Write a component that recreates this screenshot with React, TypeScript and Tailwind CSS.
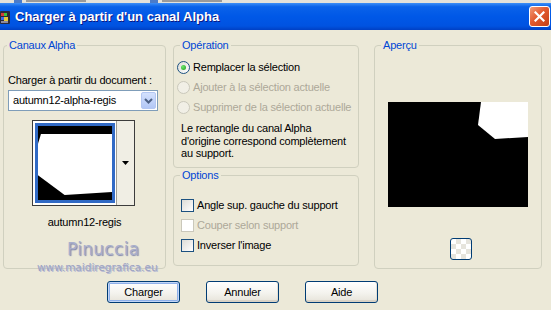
import React from "react";

function Radio({ checked, disabled }: { checked?: boolean; disabled?: boolean }) {
  return (
    <span
      className={
        disabled
          ? "w-[13px] h-[13px] rounded-full border border-[#CAC8BB] bg-[#F1EFE6] flex items-center justify-center shrink-0"
          : "w-[13px] h-[13px] rounded-full border border-[#1C5180] bg-[linear-gradient(135deg,#DCDCD7,#FFFFFF)] flex items-center justify-center shrink-0"
      }
    >
      {checked && (
        <span className="w-[5px] h-[5px] rounded-full bg-[radial-gradient(circle_at_35%_35%,#6CE86C,#1E9A1E)]" />
      )}
    </span>
  );
}

function Check({ disabled }: { disabled?: boolean }) {
  return (
    <span
      className={
        disabled
          ? "w-[13px] h-[13px] border border-[#CAC8BB] bg-white shrink-0"
          : "w-[13px] h-[13px] border border-[#1C5180] bg-[linear-gradient(135deg,#DCDCD7,#FFFFFF)] shrink-0"
      }
    />
  );
}

function XPButton({ label, def }: { label: string; def?: boolean }) {
  return (
    <div
      className={
        def
          ? "w-[73px] h-[22px] rounded-[3px] border border-[#003C74] bg-[linear-gradient(180deg,#FFFFFF_0%,#F4F3EE_55%,#E6E3D9_100%)] shadow-[inset_0_0_0_1px_#C3D6F6,inset_0_0_0_2px_#8EB0EA] flex items-center justify-center text-[11px] text-black"
          : "w-[73px] h-[22px] rounded-[3px] border border-[#003C74] bg-[linear-gradient(180deg,#FFFFFF_0%,#F4F3EE_55%,#E6E3D9_100%)] shadow-[inset_0_-2px_0_#D8D2C6,inset_-1px_0_0_#E4E0D5] flex items-center justify-center text-[11px] text-black"
      }
    >
      {label}
    </div>
  );
}

export default function App() {
  return (
    <div className="relative w-[551px] h-[310px] overflow-hidden bg-[#ECE9D8] font-['Liberation_Sans',Arial,sans-serif] text-[11px] tracking-[-0.2px] text-black">
      {/* strip of window behind */}
      <div className="h-[3px] bg-[#E4E2DA] flex">
        <div className="ml-[14px] w-[8px] h-[3px] bg-[#4A7BC9]" />
        <div className="ml-[4px] w-[60px] h-[2px] bg-[#9A9A9A]" />
        <div className="ml-[64px] w-[8px] h-[3px] bg-[#4A7BC9]" />
        <div className="ml-[4px] w-[60px] h-[2px] bg-[#9A9A9A]" />
      </div>

      {/* title bar */}
      <div className="h-[27px] flex items-center bg-[linear-gradient(180deg,#3D8FF7_0%,#0A62E9_14%,#0058E7_50%,#0053E1_85%,#0040C4_100%)]">
        <svg width="10" height="13" viewBox="0 0 10 13" className="shrink-0 mt-[1px]">
          <rect x="0" y="0" width="10" height="13" rx="1" fill="#2A2A3A" />
          <rect x="1" y="2" width="3" height="3" fill="#D83A3A" />
          <rect x="4" y="2" width="3" height="3" fill="#3AC83A" />
          <rect x="1" y="6" width="3" height="3" fill="#3A6AE8" />
          <rect x="4" y="6" width="4" height="4" fill="#E8C83A" />
          <rect x="1" y="10" width="7" height="2" fill="#8A8AA0" />
        </svg>
        <div className="ml-[5px] text-white font-bold text-[13px] tracking-normal leading-none whitespace-nowrap [text-shadow:1px_1px_0_#0A1883]">
          Charger à partir d'un canal Alpha
        </div>
        <div className="flex-1" />
        <div className="w-[21px] h-[21px] mr-[1px] rounded-[3px] border border-white bg-[linear-gradient(135deg,#F19A78_0%,#E25A2F_45%,#C53F15_100%)] flex items-center justify-center">
          <svg width="11" height="11" viewBox="0 0 11 11">
            <path d="M1.5 1.5 L9.5 9.5 M9.5 1.5 L1.5 9.5" stroke="#FFFFFF" strokeWidth="2.2" strokeLinecap="square" />
          </svg>
        </div>
      </div>

      {/* body */}
      <div className="flex pt-[8px] pl-[3px]">
        {/* Canaux Alpha */}
        <fieldset className="w-[163px] h-[231px] rounded-[4px] border border-[#D0D0BF]">
          <legend className="ml-[3px] px-[2px] leading-[14px] text-[#0046D5]">Canaux Alpha</legend>
          <div className="pt-[22px] pl-[4px]">
            <div className="leading-[13px] whitespace-nowrap">Charger à partir du document :</div>
            <div className="mt-[3px] w-[150px] h-[21px] border border-[#7F9DB9] bg-white p-[1px] flex items-center">
              <div className="flex-1 pl-[3px] leading-[17px] whitespace-nowrap">autumn12-alpha-regis</div>
              <div className="w-[15px] h-[17px] rounded-[2px] border border-[#B4C7F2] bg-[linear-gradient(180deg,#D4E1FD,#B2C7F6)] flex items-center justify-center">
                <svg width="9" height="6" viewBox="0 0 9 6">
                  <path d="M1 1 L4.5 4.5 L8 1" stroke="#4D6185" strokeWidth="2" fill="none" />
                </svg>
              </div>
            </div>
            <div className="mt-[9px] ml-[24px] w-[103px] h-[86px] border border-[#3C3C3C] flex">
              <div className="w-[83px] h-full bg-white pl-[2px] pt-[2px] pr-[1px] pb-[2px]">
                <div className="w-[80px] h-[80px] border-[3px] border-[#316AC5]">
                  <svg width="74" height="74" viewBox="0 0 75 75" preserveAspectRatio="none" className="block">
                    <rect width="75" height="75" fill="#000" />
                    <polygon points="3,8 75,8 75,67 27,70 0,50 0,18" fill="#FFF" />
                  </svg>
                </div>
              </div>
              <div className="flex-1 h-full border-l border-[#A09E94] bg-[#F0EEE4] flex items-center justify-center">
                <svg width="7" height="4" viewBox="0 0 7 4">
                  <path d="M0 0 L7 0 L3.5 4 Z" fill="#000" />
                </svg>
              </div>
            </div>
            <div className="mt-[10px] w-[161px] -ml-[4px] text-center leading-[13px]">autumn12-regis</div>
          </div>
        </fieldset>

        {/* middle column */}
        <div className="ml-[7px] w-[186px] flex flex-col">
          <fieldset className="w-[186px] h-[130px] rounded-[4px] border border-[#D0D0BF]">
            <legend className="ml-[6px] px-[2px] leading-[14px] text-[#0046D5]">Opération</legend>
            <div className="pt-[5px] pl-[3px]">
              <div className="h-[20px] flex items-center gap-[3px] whitespace-nowrap">
                <Radio checked />
                <span>Remplacer la sélection</span>
              </div>
              <div className="h-[20px] flex items-center gap-[3px] whitespace-nowrap text-[#ACA899]">
                <Radio disabled />
                <span>Ajouter à la sélection actuelle</span>
              </div>
              <div className="h-[20px] flex items-center gap-[3px] whitespace-nowrap text-[#ACA899]">
                <Radio disabled />
                <span>Supprimer de la sélection actuelle</span>
              </div>
              <div className="mt-[5px] pl-[4px] leading-[12.5px] whitespace-nowrap">
                Le rectangle du canal Alpha
                <br />
                d'origine correspond complètement
                <br />
                au support.
              </div>
            </div>
          </fieldset>

          <fieldset className="w-[186px] h-[98px] rounded-[4px] border border-[#D0D0BF]">
            <legend className="ml-[6px] px-[2px] leading-[14px] text-[#0046D5]">Options</legend>
            <div className="pt-[13px] pl-[7px]">
              <div className="h-[20px] flex items-center gap-[3px] whitespace-nowrap">
                <Check />
                <span>Angle sup. gauche du support</span>
              </div>
              <div className="h-[20px] flex items-center gap-[3px] whitespace-nowrap text-[#ACA899]">
                <Check disabled />
                <span>Couper selon support</span>
              </div>
              <div className="h-[20px] flex items-center gap-[3px] whitespace-nowrap">
                <Check />
                <span>Inverser l'image</span>
              </div>
            </div>
          </fieldset>
        </div>

        {/* Aperçu */}
        <fieldset className="ml-[15px] w-[168px] h-[231px] rounded-[4px] border border-[#D0D0BF]">
          <legend className="ml-[6px] px-[2px] leading-[14px] text-[#0046D5]">Aperçu</legend>
          <div className="pt-[50px] pl-[13px]">
            <svg width="140" height="105" viewBox="0 0 140 105" className="block">
              <rect width="140" height="105" fill="#000" />
              <polygon points="93,0 140,0 140,35 107,37 90,23" fill="#FFF" />
            </svg>
            <div className="mt-[31px] ml-[62px] w-[22px] h-[22px] rounded-[3px] border border-[#003C74] bg-[repeating-conic-gradient(#E6E4DC_0_25%,#FFFFFF_0_50%)] bg-[length:10px_10px]" />
          </div>
        </fieldset>
      </div>

      {/* buttons */}
      <div className="mt-[12px] pl-[107px] flex gap-[26px]">
        <XPButton label="Charger" def />
        <XPButton label="Annuler" />
        <XPButton label="Aide" />
      </div>

      {/* watermark */}
      <div className="absolute left-[67px] top-[239px] font-['DejaVu_Sans',sans-serif] text-[17px] tracking-[0.3px] leading-[20px] text-[#A9AECB] [text-shadow:1px_1px_1px_#7F85AB]">
        Pinuccia
      </div>
      <div className="absolute left-[37px] top-[261px] font-['DejaVu_Sans',sans-serif] text-[10.5px] tracking-normal leading-[12px] text-[#9CA2C2] [text-shadow:1px_1px_0_#B8BCD4]">
        www.maidiregrafica.eu
      </div>
    </div>
  );
}
